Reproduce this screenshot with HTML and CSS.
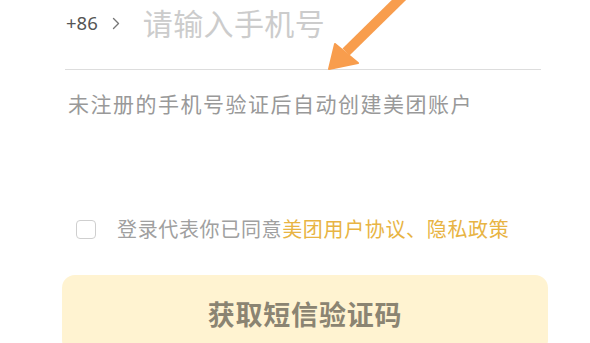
FILE: index.html
```html
<!DOCTYPE html>
<html lang="zh-CN">
<head>
<meta charset="utf-8">
<title>登录</title>
<link rel="stylesheet" href="styles.css">
</head>
<body>
<main class="page">
  <div class="phone-row">
    <span class="code">+86</span>
    <svg class="chevron" width="8" height="13" viewBox="0 0 8 13"><path d="M1.5 1.5 L6.5 6.5 L1.5 11.5" fill="none" stroke="#777" stroke-width="1.4" stroke-linecap="round" stroke-linejoin="round"/></svg>
    <span class="placeholder">请输入手机号</span>
  </div>
  <p class="hint">未注册的手机号验证后自动创建美团账户</p>
  <div class="agree">
    <span class="checkbox"></span>
    <span class="agree-text">登录代表你已同意<span class="link">美团用户协议、隐私政策</span></span>
  </div>
  <div class="btn">获取短信验证码</div>
</main>
<svg class="arrow" width="590" height="343" viewBox="0 0 590 343">
  <line x1="403" y1="-4" x2="346" y2="52" stroke="#f89d4d" stroke-width="10"/>
  <polygon points="329,69 335,44 358,63" fill="#f89d4d" stroke="#f89d4d" stroke-width="2" stroke-linejoin="round"/>
</svg>
</body>
</html>
```
FILE: styles.css
```css
html, body {
  margin: 0;
  padding: 0;
  background: #ffffff;
  overflow: hidden;
}
body {
  width: 590px;
  height: 343px;
  position: relative;
  font-family: "Noto Sans CJK SC", "Noto Sans", sans-serif;
}
.page {
  padding: 0 49px 0 65px;
}
.phone-row {
  display: flex;
  align-items: flex-start;
  padding-top: 7px;
  height: 62px;
  border-bottom: 1px solid #dddddd;
}
.code {
  font-family: "Noto Sans", sans-serif;
  font-size: 18.5px;
  color: #555555;
  line-height: 32px;
  margin-left: 1px;
}
.chevron {
  margin: 10px 0 0 14px;
}
.placeholder {
  margin-left: 23px;
  font-size: 30px;
  line-height: 30px;
  color: #cccccc;
  letter-spacing: 0.4px;
}
.hint {
  margin: 22px 0 0 3px;
  font-size: 21px;
  line-height: 22px;
  color: #999999;
  letter-spacing: 1.5px;
}
.agree {
  display: flex;
  align-items: center;
  margin-top: 104px;
  height: 22px;
}
.checkbox {
  width: 18px;
  height: 17px;
  border: 1.5px solid #cfcfcf;
  border-radius: 4px;
  margin-left: 11px;
}
.agree-text {
  margin-left: 21px;
  font-size: 20px;
  line-height: 22px;
  color: #a0a0a0;
  letter-spacing: 0.65px;
}
.link {
  color: #e8b443;
}
.btn {
  margin: 35px -7px 0 -3px;
  height: 78px;
  border-radius: 13px;
  background: #fff3d1;
  display: flex;
  align-items: center;
  justify-content: center;
  font-size: 27px;
  font-weight: 700;
  color: #8b8472;
  letter-spacing: 0.8px;
  line-height: 30px;
}
.arrow {
  position: absolute;
  left: 0;
  top: 0;
  pointer-events: none;
}
```
